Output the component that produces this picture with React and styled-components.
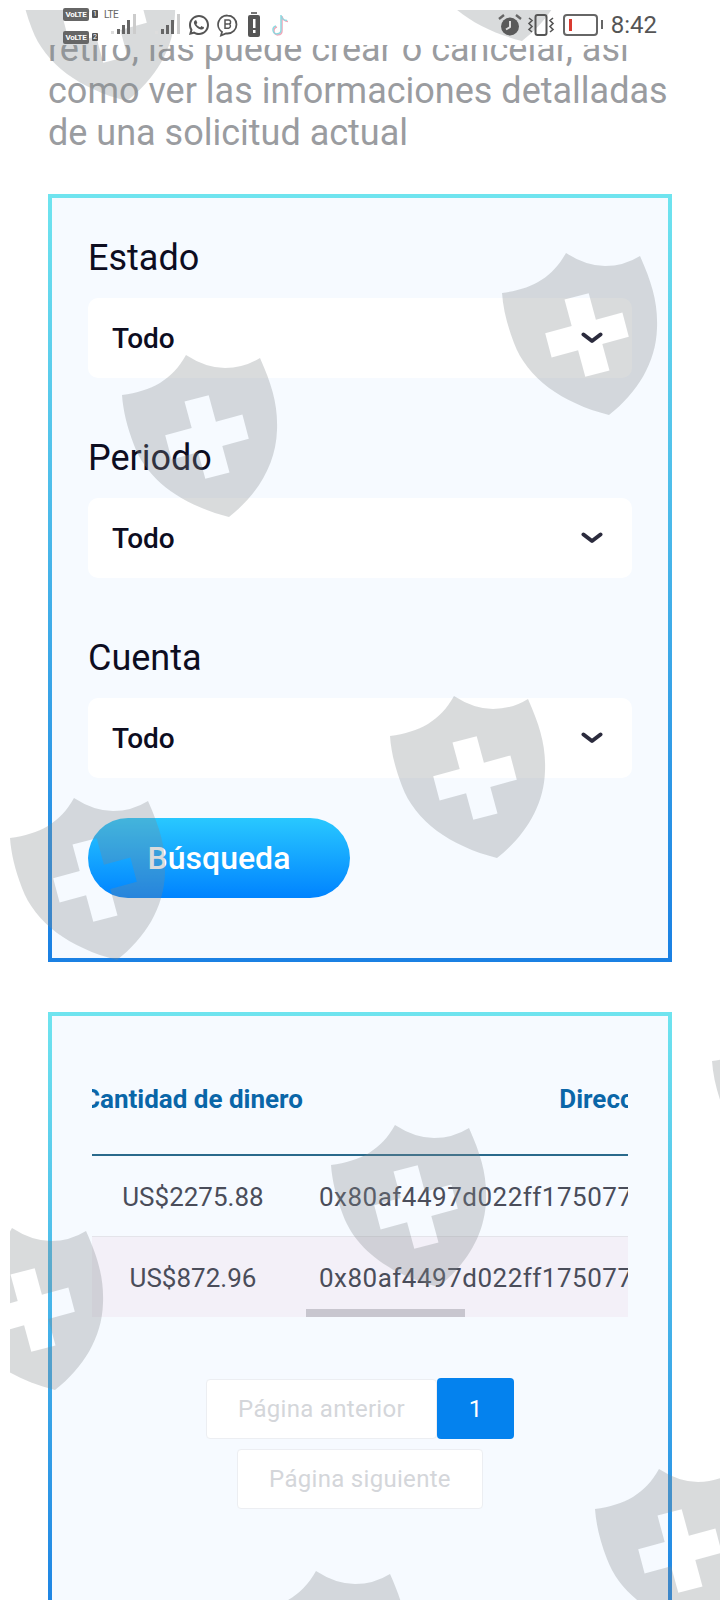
import React, { useLayoutEffect, useRef } from "react";
import styled, { createGlobalStyle } from "styled-components";
import { RiWhatsappLine } from "react-icons/ri";

const address = "0x80af4497d022ff175077a1c3e9b46d28f05c7e1";
const rows = [
    { amount: "US$2275.88", address },
    { amount: "US$872.96", address },
];
const filters = ["Estado", "Periodo", "Cuenta"];
const shields = [
    [10, -71], [405, -131], [492, 243], [112, 345], [380, 686],
    [0, 788], [321, 1115], [-62, 1218], [702, 1011], [585, 1459], [242, 1561],
];

const GlobalStyle = createGlobalStyle`
    * {
        box-sizing: border-box;
    }
    body {
        margin: 0;
        background: #fff;
        font-family: Roboto, "Liberation Sans", sans-serif;
    }
`;

const Shield = ({ x, y }) => (
    <ShieldMark $x={x} $y={y} width="156" height="165" viewBox="0 0 156 165">
        <path
            fillRule="evenodd"
            d="M64 0Q84 13 103 13Q122 13 138 3C150 30 156 50 155 75C154 110 135 140 107 162C60 150 25 125 12 90C5 72 1 55 0 40C30 36 50 25 64 0Z
            M62.5 46.6L86.7 40.2L93.9 66.7L120.4 59.5L126.8 83.7L100.3 90.9L107.5 117.4L83.3 123.8L76.1 97.3L49.6 104.5L43.2 80.3L69.7 73.1Z"
        />
    </ShieldMark>
);

const Signal = () => (
    <svg width="28" height="24" viewBox="0 0 28 24">
        <rect x="1" y="18" width="3" height="3" fill="#ddd" />
        <rect x="7" y="16" width="3" height="5" fill="#666" />
        <rect x="12" y="12" width="3" height="9" fill="#666" />
        <rect x="17" y="7" width="3" height="14" fill="#666" />
        <rect x="23" y="1" width="3" height="20" fill="#ccc" />
    </svg>
);

const TikTokIcon = () => (
    <svg width="22" height="26" viewBox="0 0 22 26" fill="none" strokeWidth="1.5">
        <path d="M12 3v15a4 4 0 1 1-5-4M12 3c.5 3 3 5.500 6 5.500" stroke="#f3a6b8" transform="translate(1 1)" />
        <path d="M12 3v15a4 4 0 1 1-5-4M12 3c.5 3 3 5.500 6 5.500" stroke="#8fd8df" />
    </svg>
);

const Chevron = () => (
    <svg width="22" height="12" viewBox="0 0 22 12" fill="none">
        <path d="M2.500 2.500L11 9L19.500 2.500" stroke="#2b2b3d" strokeWidth="4" strokeLinecap="round" strokeLinejoin="round" />
    </svg>
);

const App = () => {
    const tableRef = useRef(null);

    useLayoutEffect(() => {
        tableRef.current.scrollLeft = 17;
    }, []);

    return (
        <Page>
            <GlobalStyle />
            <StatusBar>
                <StatusLeft>
                    <SimStack>
                        <SimRow><VoLte>VoLTE</VoLte><SimNum>1</SimNum></SimRow>
                        <SimRow><VoLte>VoLTE</VoLte><SimNum>2</SimNum></SimRow>
                    </SimStack>
                    <SignalSlot>
                        <LteTag>LTE</LteTag>
                        <Signal />
                    </SignalSlot>
                    <SignalSlot $empty>
                        <Signal />
                    </SignalSlot>
                    <RiWhatsappLine size={24} color="#555" />
                    <svg width="23" height="24" viewBox="0 0 23 24" fill="none">
                        <path d="M11.500 2.500a9 9 0 0 1 0 18H10l-5 2 1-3.600a9 9 0 0 1 5.500-16.400z" stroke="#555" strokeWidth="1.800" />
                        <path d="M9 7h3.400a2 2 0 0 1 .8 3.900 2.300 2.300 0 0 1-.6 4.300H9zM9 11h3.400" stroke="#555" strokeWidth="1.500" />
                    </svg>
                    <WarnBattery width="14" height="26" viewBox="0 0 14 26">
                        <rect x="4" y="0" width="6" height="2" fill="#777" />
                        <rect x="1" y="3" width="12" height="22" rx="2" fill="#555" />
                        <rect x="6" y="7" width="2.500" height="9" fill="#fff" />
                        <rect x="6" y="18" width="2.500" height="3" fill="#fff" />
                    </WarnBattery>
                    <TikTokMark><TikTokIcon /></TikTokMark>
                </StatusLeft>
                <StatusRight>
                    <svg width="24" height="24" viewBox="0 0 24 24">
                        <circle cx="12" cy="13.500" r="9" fill="#5a5a5a" />
                        <path d="M12 8v6l-4 2.500" stroke="#ddd" strokeWidth="2" fill="none" />
                        <path d="M1 6l5-4M23 6l-5-4" stroke="#666" strokeWidth="2.400" />
                    </svg>
                    <svg width="28" height="24" viewBox="0 0 28 24" fill="none" stroke="#555">
                        <rect x="8.500" y="2" width="11" height="20" rx="2" strokeWidth="2" />
                        <path d="M2 5l3 2.500-3 3 3 3-3 3 3 2.500M26 5l-3 2.500 3 3-3 3 3 3-3 2.500" strokeWidth="1.600" />
                    </svg>
                    <BatteryLow>
                        <BatteryBody><BatteryLevel /></BatteryBody>
                        <BatteryNub />
                    </BatteryLow>
                    <Clock>8:42</Clock>
                </StatusRight>
            </StatusBar>

            <Content>
                <Intro>retiro, las puede crear o cancelar, así como ver las informaciones detalladas de una solicitud actual</Intro>

                <Card>
                    {filters.map((label) => (
                        <Field key={label}>
                            <FieldLabel>{label}</FieldLabel>
                            <Select>
                                <span>Todo</span>
                                <Chevron />
                            </Select>
                        </Field>
                    ))}
                    <SearchButton>Búsqueda</SearchButton>
                </Card>

                <ResultCard>
                    <TableArea>
                        <TableScroll ref={tableRef}>
                            <Table>
                                <thead>
                                    <tr>
                                        <Th>Cantidad de dinero</Th>
                                        <Th>Dirección</Th>
                                    </tr>
                                </thead>
                                <tbody>
                                    {rows.map((r, idx) => (
                                        <Row key={r.amount} $striped={idx % 2 === 1}>
                                            <Td>{r.amount}</Td>
                                            <AddressTd>{r.address}</AddressTd>
                                        </Row>
                                    ))}
                                </tbody>
                            </Table>
                        </TableScroll>
                        <ScrollThumb />
                    </TableArea>

                    <Pagination>
                        <PageButton disabled>Página anterior</PageButton>
                        <PageNumber>1</PageNumber>
                        <PageButton disabled>Página siguiente</PageButton>
                    </Pagination>
                </ResultCard>
            </Content>

            <Watermark>
                {shields.map(([x, y]) => (
                    <Shield key={`${x}-${y}`} x={x} y={y} />
                ))}
            </Watermark>
        </Page>
    );
};

const Page = styled.div`
    position: relative;
    width: 720px;
    height: 1600px;
    overflow: hidden;
    display: flex;
    flex-direction: column;
    background: #fff;
`;

const Watermark = styled.div`
    position: absolute;
    top: 10px;
    left: 10px;
    right: 0;
    bottom: 0;
    overflow: hidden;
    pointer-events: none;
    z-index: 1;
`;

const ShieldMark = styled.svg`
    position: absolute;
    left: ${(p) => p.$x}px;
    top: ${(p) => p.$y}px;
    fill: rgba(130, 135, 140, 0.3);
`;

const StatusBar = styled.div`
    position: relative;
    z-index: 2;
    flex: none;
    height: 45px;
    padding: 0 63px;
    display: flex;
    justify-content: space-between;
    align-items: center;
`;

const StatusLeft = styled.div`
    display: flex;
    align-items: center;
    gap: 5px;
    margin-top: 4px;
`;

const StatusRight = styled.div`
    display: flex;
    align-items: center;
    gap: 5px;
    margin-top: 4px;
`;

const SimStack = styled.div`
    display: flex;
    flex-direction: column;
    gap: 10px;
    margin-top: 2px;
`;

const SimRow = styled.div`
    display: flex;
    align-items: center;
    gap: 3px;
`;

const VoLte = styled.span`
    width: 26px;
    height: 13px;
    border-radius: 2px;
    background: #666;
    color: #fff;
    font-size: 8px;
    line-height: 13px;
    font-weight: 700;
    text-align: center;
    letter-spacing: -0.3px;
`;

const SimNum = styled.span`
    width: 6px;
    height: 8px;
    border-radius: 1px;
    background: #555;
    color: #fff;
    font-size: 7px;
    line-height: 8px;
    text-align: center;
`;

const SignalSlot = styled.div`
    position: relative;
    display: flex;
    align-items: flex-end;
    margin-left: ${(p) => (p.$empty ? "11px" : "7px")};
    height: 24px;
`;

const LteTag = styled.span`
    position: absolute;
    left: -6px;
    top: -3px;
    font-size: 10px;
    line-height: 10px;
    letter-spacing: -0.5px;
    color: #666;
`;

const WarnBattery = styled.svg`
    margin-left: 3px;
`;

const TikTokMark = styled.span`
    display: flex;
    margin-left: 3px;
`;

const BatteryLow = styled.div`
    display: flex;
    align-items: center;
    gap: 3px;
    margin-left: 3px;
`;

const BatteryBody = styled.div`
    width: 35px;
    height: 22px;
    padding: 3px 4px;
    border: 2px solid #666;
    border-radius: 4px;
`;

const BatteryLevel = styled.div`
    width: 3px;
    height: 100%;
    background: #d93a30;
`;

const BatteryNub = styled.div`
    width: 2px;
    height: 9px;
    background: #666;
`;

const Clock = styled.span`
    font-size: 24px;
    color: #555;
    margin-left: 3px;
`;

const Content = styled.div`
    flex: 1;
    min-height: 0;
    overflow: hidden;
    padding: 0 48px;
`;

const Intro = styled.p`
    margin: -17px 0 40px;
    font-size: 36px;
    line-height: 42px;
    color: #9a9ca0;
`;

const Card = styled.div`
    border: 4px solid transparent;
    background: linear-gradient(#f6faff, #f6faff) padding-box,
        linear-gradient(#6fe4ef, #1a80e3) border-box;
    padding: 36px 36px 60px;
`;

const Field = styled.div`
    margin-bottom: 56px;

    &:nth-of-type(3) {
        margin-bottom: 40px;
    }
`;

const FieldLabel = styled.div`
    font-size: 36px;
    line-height: 48px;
    margin-bottom: 16px;
    color: #0d0d1f;
`;

const Select = styled.div`
    height: 80px;
    padding: 0 29px 0 24px;
    display: flex;
    justify-content: space-between;
    align-items: center;
    background: #fff;
    border-radius: 10px;
    font-size: 28px;
    font-weight: 500;
    color: #0d0d1f;
`;

const SearchButton = styled.button`
    display: block;
    width: 262px;
    height: 80px;
    border: none;
    border-radius: 40px;
    background: linear-gradient(#29c8ff, #0083ff);
    color: #fff;
    font-family: inherit;
    font-size: 32px;
    font-weight: 500;
`;

const ResultCard = styled(Card)`
    margin-top: 50px;
    padding: 36px 40px 120px;
`;

const TableArea = styled.div`
    position: relative;
`;

const TableScroll = styled.div`
    overflow: hidden;
`;

const Table = styled.table`
    border-collapse: collapse;
    white-space: nowrap;
`;

const Th = styled.th`
    padding: 32px 8px 40px;
    border-bottom: 2px solid #2a6a8c;
    font-size: 26px;
    line-height: 30px;
    font-weight: 700;
    color: #0a66a8;
`;

const Row = styled.tr`
    background: ${(p) => (p.$striped ? "#f3f0f8" : "transparent")};
    border-bottom: 1px solid #e4e4ea;

    &:last-child {
        border-bottom: none;
    }
`;

const Td = styled.td`
    height: 81px;
    padding: 3px 8px 0;
    text-align: center;
    font-size: 26px;
    color: #4a4d5a;
`;

const AddressTd = styled(Td)`
    letter-spacing: 0.5px;
`;

const ScrollThumb = styled.div`
    position: absolute;
    bottom: 0;
    left: 214px;
    width: 159px;
    height: 8px;
    background: #c8c6cf;
`;

const Pagination = styled.div`
    margin-top: 61px;
    display: flex;
    flex-wrap: wrap;
    justify-content: center;
    align-items: center;
    row-gap: 10px;
`;

const PageButton = styled.button`
    height: 60px;
    padding: 0 31px;
    border: 1px solid #eceef2;
    border-radius: 4px;
    background: #fff;
    color: #d4d6da;
    font-family: inherit;
    font-size: 24px;
    letter-spacing: 0.3px;
`;

const PageNumber = styled.button`
    width: 77px;
    height: 61px;
    border: none;
    border-radius: 4px;
    background: #0482ee;
    color: #fff;
    font-family: inherit;
    font-size: 24px;
`;

export default App;
